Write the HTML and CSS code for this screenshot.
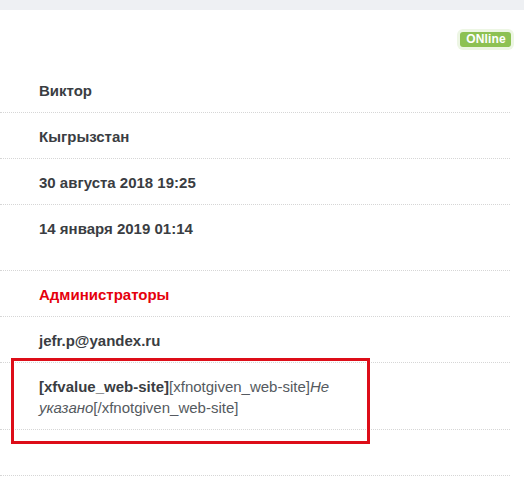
FILE: index.html
```html
<!DOCTYPE html>
<html lang="ru">
<head>
<meta charset="utf-8">
<title>Профиль</title>
<link rel="stylesheet" href="styles.css">
</head>
<body>
<div class="topband"></div>
<div class="header">
  <span class="badge">ONline</span>
</div>
<dl class="info">
  <div class="row"><dd>Виктор</dd></div>
  <div class="row"><dd>Кыгрызстан</dd></div>
  <div class="row"><dd>30 августа 2018 19:25</dd></div>
  <div class="row row-tall"><dd>14 января 2019 01:14</dd></div>
  <div class="row"><dd class="red">Администраторы</dd></div>
  <div class="row"><dd>jefr.p@yandex.ru</dd></div>
  <div class="row"><dd class="wrap"><b>[xfvalue_web-site]</b><span class="plain">[xfnotgiven_web-site]<i>Не указано</i>[/xfnotgiven_web-site]</span></dd></div>
  <div class="row"><dd></dd></div>
</dl>
<div class="highlight"></div>
</body>
</html>
```

FILE: styles.css
```css
html, body {
  margin: 0;
  padding: 0;
  background: #ffffff;
}
body {
  position: relative;
  width: 524px;
  height: 495px;
  overflow: hidden;
  font-family: "Liberation Sans", Arial, sans-serif;
  font-size: 15px;
  color: #3a3d42;
}
.topband {
  height: 10px;
  background: #eef0f3;
}
.header {
  display: flex;
  justify-content: flex-end;
  padding: 22px 13px 0 0;
  height: 35px;
}
.badge {
  display: inline-block;
  height: 15px;
  line-height: 15px;
  padding: 0 5px 0 6px;
  background: #8dc153;
  color: #ffffff;
  font-weight: bold;
  font-size: 12px;
  letter-spacing: 0.2px;
  border-radius: 3px;
  box-shadow: 0 0 0 3px #edf6e4;
}
.info {
  margin: 0;
  width: 510px;
}
.row {
  border-bottom: 1px dotted #d6d6d6;
  padding: 13px 0 11px 39px;
  min-height: 21px;
}
.row-tall {
  padding-bottom: 31px;
}
.row dd {
  margin: 0;
  line-height: 21px;
  font-weight: bold;
  min-height: 21px;
}
.row dd.red {
  color: #e5000c;
}
.row dd.wrap {
  max-width: 320px;
}
.plain {
  font-weight: normal;
  color: #555a60;
}
.highlight {
  position: absolute;
  left: 11px;
  top: 358px;
  width: 353px;
  height: 80px;
  border: 3px solid #dd0d18;
}
```
